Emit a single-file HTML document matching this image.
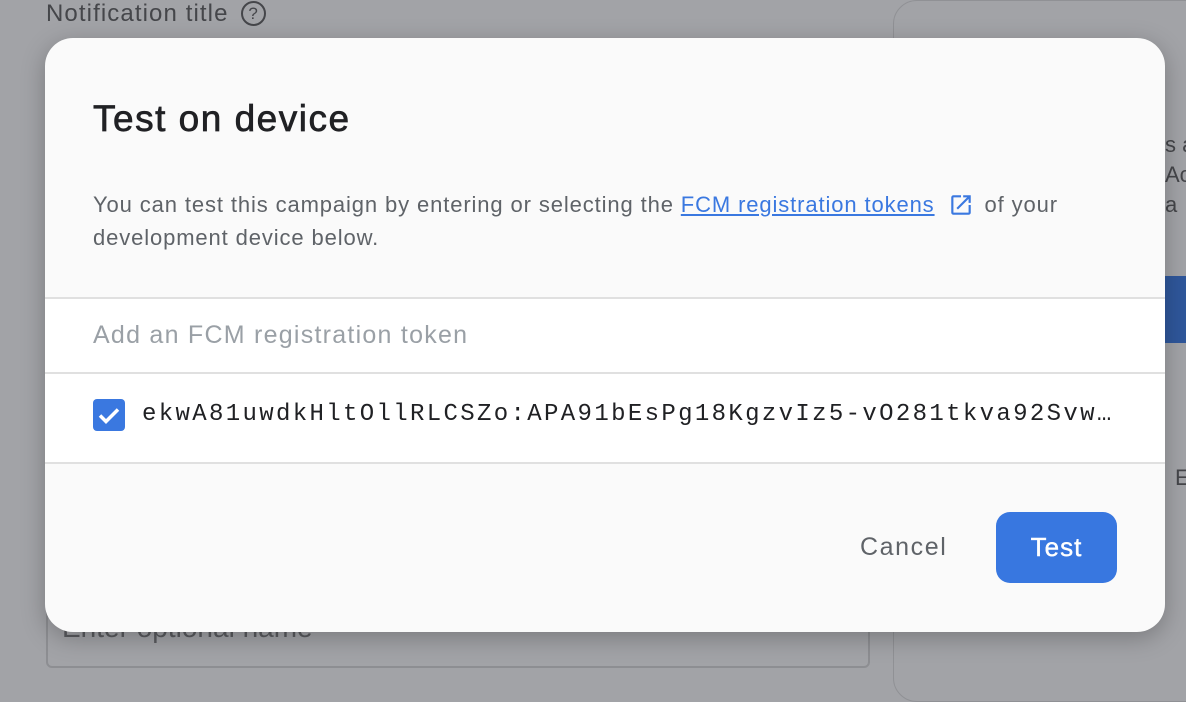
<!DOCTYPE html>
<html><head><style>
body{margin:0;width:1186px;height:670px;background:#a2a3a7;font-family:"Liberation Sans",sans-serif;position:relative;overflow:hidden}
.bg1{position:absolute;left:46px;top:0;font-size:24px;color:#45464a;letter-spacing:1.1px}
.q{display:inline-block;width:21px;height:21px;border:2.5px solid #45464a;border-radius:50%;font-size:17px;text-align:center;line-height:21px;margin-left:12px;vertical-align:2px;letter-spacing:0}
.card{position:absolute;left:893px;top:0;width:320px;height:700px;border:1px solid #909195;border-radius:24px;}
.bar{position:absolute;left:1100px;top:276px;width:90px;height:67px;background:#2f579b}
.inp{position:absolute;left:46px;top:560px;width:820px;height:104px;border:2px solid #8d8e92;border-radius:6px;font-size:28px;color:#5a5b5f}
.dlg{position:absolute;left:45px;top:38px;width:1120px;height:594px;background:#fafafa;border-radius:28px;box-shadow:0 6px 24px rgba(0,0,0,.25);overflow:hidden}
h1{position:absolute;left:48px;top:60px;margin:0;font-size:37px;font-weight:normal;color:#202124;letter-spacing:1.5px;-webkit-text-stroke:.7px #202124}
.p{position:absolute;left:48px;top:150px;font-size:22px;line-height:33px;color:#5f6368;width:1060px;letter-spacing:.88px}
.p a{color:#3a78e0;text-decoration:underline}
.sec{position:absolute;left:0;width:1120px;background:#fff;border-top:2px solid #e0e0e0}
.tok{font-family:"Liberation Mono",monospace;font-size:24px;color:#202124;position:absolute;left:97px;top:363px;letter-spacing:2.35px;white-space:nowrap}
.cb{position:absolute;left:48px;top:361px;width:32px;height:32px;background:#3a78e0;border-radius:4px}
.cancel{position:absolute;left:815px;top:495px;font-size:25px;color:#5f6368;letter-spacing:1.6px}
.btn{position:absolute;left:951px;top:474px;width:121px;height:71px;background:#3877e0;border-radius:14px;color:#fff;font-size:26px;text-align:center;line-height:71px;letter-spacing:1px;-webkit-text-stroke:.4px #fff}
</style></head><body>
<div class="bg1">Notification title<span class="q">?</span></div>
<div class="card"></div>
<div style="position:absolute;left:1165px;top:130px;font-size:22px;color:#45464a;line-height:30px">s a<br>Act<br>a</div>
<div class="bar"></div>
<div style="position:absolute;left:1175px;top:465px;font-size:22px;color:#45464a">E</div>
<div class="inp"><span style="position:absolute;left:14px;top:50px">Enter optional name</span></div>
<div class="dlg">
<h1>Test on device</h1>
<div class="p">You can test this campaign by entering or selecting the <a>FCM registration tokens</a> <svg width="26" height="26" viewBox="0 0 24 24" style="vertical-align:-6px;margin:0 4px 0 6px"><path d="M19 19H5V5h7V3H5a2 2 0 0 0-2 2v14a2 2 0 0 0 2 2h14a2 2 0 0 0 2-2v-7h-2v7zM14 3v2h3.6l-9.8 9.8 1.4 1.4L19 6.4V10h2V3h-7z" fill="#3a78e0"/></svg> of your<br>development device below.</div>
<div class="sec" style="top:259px;height:74px"><span style="position:absolute;left:48px;top:22px;font-size:25px;color:#9aa0a6;letter-spacing:1.25px">Add an FCM registration token</span></div>
<div class="sec" style="top:334px;height:88px;border-bottom:2px solid #e0e0e0"></div>
<div class="cb"><svg width="32" height="32" viewBox="0 0 32 32"><path d="M7 16.5l6 6 12-12" stroke="#fff" stroke-width="3.5" fill="none"/></svg></div>
<div class="tok">ekwA81uwdkHltOllRLCSZo:APA91bEsPg18KgzvIz5-vO281tkva92Svw…</div>
<div class="cancel">Cancel</div>
<div class="btn">Test</div>
</div>
</body></html>
